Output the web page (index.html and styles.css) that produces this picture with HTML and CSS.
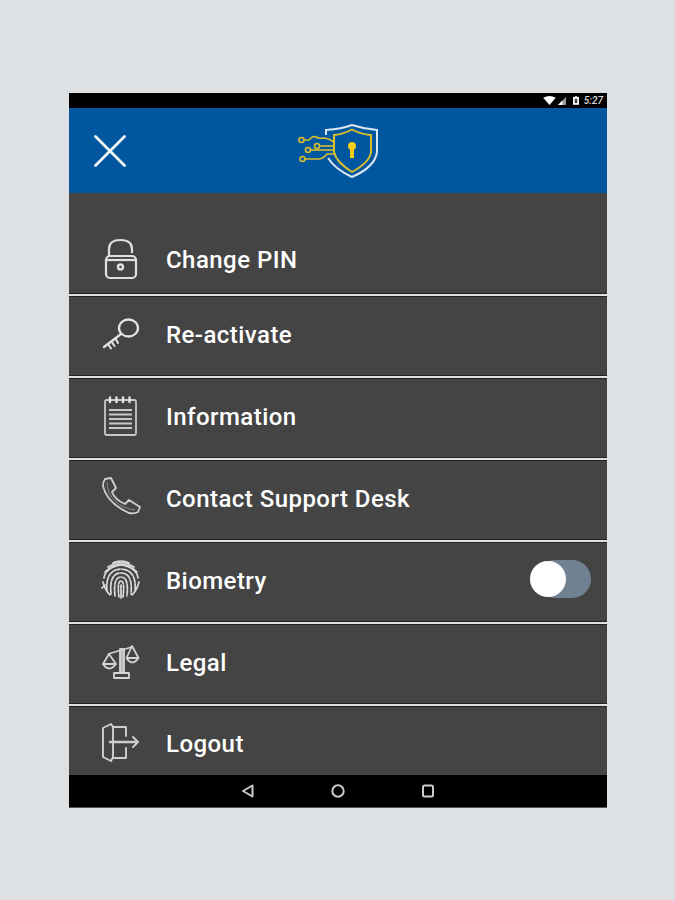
FILE: index.html
```html
<!DOCTYPE html>
<html lang="en">
<head>
<meta charset="utf-8">
<title>Menu</title>
<link rel="stylesheet" href="styles.css">
</head>
<body>
<main class="device">
  <div class="status">
    <svg class="st-wifi" viewBox="0 0 14 10"><path d="M0 2Q7-2 14 2L7 10Z" fill="#fff"/></svg>
    <svg class="st-signal" viewBox="0 0 9 9"><path d="M9 0V9H0Z" fill="#999"/><path d="M5 4V9H0Z" fill="#fff"/></svg>
    <svg class="st-batt" viewBox="0 0 7 10"><path d="M2 0H5V1H7V10H0V1H2Z" fill="#fff"/><rect x="2" y="3" width="3" height="5" fill="#444"/></svg>
    <span class="st-time">5:27</span>
  </div>
  <header class="topbar">
    <svg class="close" viewBox="0 0 32 32"><path d="M1.500 1.500L30.500 30.500M30.500 1.500L1.500 30.500" stroke="#f4f6f8" stroke-width="2.800" stroke-linecap="round" fill="none"/></svg>
    <svg class="logo" viewBox="0 0 80 54" fill="none">
      <path d="M28 11V6Q44 5 54 1Q66 5 79 6V28Q77 43 54 53Q37 45 30 34" stroke="#dbe6f5" stroke-width="2"/>
      <path d="M36 11Q46 10 54 5.500Q62 10 73 11V28Q72 38 54 48Q38 38 36 28Z" stroke="#d9bf2c" stroke-width="2"/>
      <circle cx="54" cy="22" r="4" fill="#f5cd1a"/>
      <rect x="52" y="23" width="4" height="11" fill="#f5cd1a"/>
      <g stroke="#d9bf2c" stroke-width="1.600">
        <circle cx="3.500" cy="16" r="2.500"/><circle cx="19" cy="22" r="2.500"/><circle cx="10" cy="26" r="2.500"/><circle cx="4.500" cy="35" r="2.500"/>
        <path d="M6 16H11Q14 12 17 12.500Q21 15 25 14Q30 14 36 18"/><path d="M21.500 22H36"/><path d="M12.500 26H36"/><path d="M7 35H20Q25 35 29 30H36"/>
      </g>
    </svg>
  </header>
  <nav class="menu">
    <a class="row first">
      <svg class="ico" viewBox="0 0 36 40"><g fill="none" stroke="#e0e0e0" stroke-width="2.200"><rect x="4" y="16" width="30" height="22" rx="4"/><path d="M7 16V9Q7 0 18.500 0Q30 0 30 9V13"/><path d="M4 20H34"/><circle cx="18.500" cy="27" r="2.500" stroke-width="2.400"/></g></svg>
      <span class="label">Change PIN</span>
    </a>
    <a class="row">
      <svg class="ico" viewBox="0 0 36 40"><g fill="none" stroke="#e4e4e4" stroke-width="2.300" stroke-linecap="round"><ellipse cx="26.500" cy="13" rx="9.500" ry="8.500"/><path d="M19 19L2 32"/><path d="M6 29L9 33.500M9.500 26.500L12.500 31M13.500 23.500L16 28" stroke-width="2"/></g></svg>
      <span class="label">Re-activate</span>
    </a>
    <a class="row">
      <svg class="ico" viewBox="0 0 36 40"><g fill="none" stroke="#c8c8c8"><rect x="3" y="3" width="31" height="35" rx="1.500" stroke-width="1.800"/><path d="M8 0.500V5M14.500 0.500V5M21 0.500V5M27.500 0.500V5" stroke="#e4e4e4" stroke-width="2.400" stroke-linecap="round"/><path d="M7 13H30M7 17.500H30M7 22H30M7 26.500H30M7 31H30" stroke-width="2"/></g></svg>
      <span class="label">Information</span>
    </a>
    <a class="row">
      <svg class="ico" viewBox="0 0 36 40"><path d="M3 0L9-1L14 9L10 13Q13 21 23 25L27 21L38 28L36 33Q32 35 27 34Q5 24 1 7Q1 3 3 0Z" fill="none" stroke="#cfcfcf" stroke-width="1.800" stroke-linejoin="round"/><path d="M5 3Q5 15 14 23Q20 29 33 31" fill="none" stroke="#8a8a8a"/></svg>
      <span class="label">Contact Support Desk</span>
    </a>
    <a class="row">
      <svg class="ico" viewBox="0 0 36 40"><g fill="none" stroke="#dcdcdc" stroke-width="1.700" stroke-linecap="round"><path d="M11 2Q19-2 27 2" stroke-dasharray="3 1.500"/><path d="M6 6Q19-3 32 6"/><path d="M3 11Q19-5 35 11"/><path d="M2 17Q3 7 19 4Q35 7 36 17"/><path d="M5 30Q3 9 19 8Q35 9 33 30" stroke-dasharray="6 1.500"/><path d="M9 33Q7 12 19 12Q31 12 29 33" stroke-dasharray="5 1.500"/><path d="M13 35Q11 16 19 16Q27 16 25 35" stroke-dasharray="4 1.500"/><path d="M17 36Q15 20 19 20Q23 20 21 36" stroke-dasharray="3 1.500"/><path d="M19 24V37"/><path d="M1 21Q3 29 8 34"/><path d="M37 21Q35 29 30 34"/><path d="M3 24L0 27"/></g></svg>
      <span class="label">Biometry</span>
      <span class="toggle"><span class="knob"></span></span>
    </a>
    <a class="row">
      <svg class="ico" viewBox="0 0 36 40"><g fill="none" stroke="#d4d4d4" stroke-width="1.800" stroke-linejoin="round"><path d="M18 6H22V30H18Z" fill="#bbb"/><path d="M12 30H27V35H12Z"/><path d="M6 11L30 4"/><path d="M7 11L1 21H14Z"/><path d="M1 21Q7 30 14 21"/><path d="M30 3L24.500 15H36.500Z"/><path d="M24.500 15Q30 24 36.500 15"/></g></svg>
      <span class="label">Legal</span>
    </a>
    <a class="row last">
      <svg class="ico" viewBox="0 0 36 40"><g fill="none" stroke="#cfcfcf" stroke-width="1.900" stroke-linejoin="round" stroke-linecap="round"><path d="M11 3H24V12M24 24V34H11"/><path d="M1 4L9 0L11 3V33L9 37L1 33Z"/><path d="M8 18H35" stroke-width="2.500"/><path d="M31 13L36 18L31 23"/></g></svg>
      <span class="label">Logout</span>
    </a>
  </nav>
  <footer class="navbar">
    <svg class="nav-ico" viewBox="0 0 14 14"><path d="M11.500 1.500V12.500L2 7Z" fill="none" stroke="#ccc" stroke-width="2" stroke-linejoin="round"/></svg>
    <svg class="nav-ico" viewBox="0 0 14 14"><circle cx="7" cy="7" r="5.700" fill="none" stroke="#ccc" stroke-width="2"/></svg>
    <svg class="nav-ico" viewBox="0 0 14 14"><rect x="2" y="1.500" width="10" height="11" rx="1.500" fill="none" stroke="#ccc" stroke-width="2"/></svg>
  </footer>
</main>
</body>
</html>
```
FILE: styles.css
```css
html, body { margin: 0; height: 100%; }
body {
  background: #dde1e4;
  padding: 93px 0 0 69px;
  box-sizing: border-box;
  font-family: Roboto, "Liberation Sans", sans-serif;
}
.device {
  width: 538px;
  height: 714px;
  display: flex;
  flex-direction: column;
  background: #000;
  overflow: hidden;
  border-bottom: 1px solid #555;
}
.status {
  height: 15px;
  flex: none;
  display: flex;
  align-items: center;
  justify-content: flex-end;
  padding-right: 4px;
  background: #000;
  color: #ddd;
}
.st-wifi { width: 13px; height: 9px; margin-right: 2px; }
.st-signal { width: 8px; height: 8px; margin-right: 7px; }
.st-batt { width: 6px; height: 9px; margin-right: 5px; }
.st-time { font-size: 10px; font-weight: 500; font-style: italic; line-height: 1; }
.topbar {
  height: 85px;
  flex: none;
  display: flex;
  align-items: center;
  background: #01579f;
  padding-left: 25px;
}
.close { width: 32px; height: 32px; }
.logo {
  width: 80px;
  height: 54px;
  margin: 0 0 0 172px;
}
.menu {
  flex: 1;
  min-height: 0;
  display: flex;
  flex-direction: column;
  gap: 1px;
  background: #222;
  overflow: hidden;
}
.row {
  height: 81px;
  flex: none;
  box-sizing: border-box;
  display: flex;
  align-items: center;
  padding: 0 16px 4px 33px;
  background: #444;
  border-bottom: 2px solid #e0e0e0;
  box-shadow: inset 0 -1px 0 #222;
}
.row.first { height: 103px; padding-top: 33px; padding-bottom: 0; }
.row.last { height: 68px; border-bottom: 0; padding-top: 6px; padding-bottom: 0; box-shadow: none; }
.ico { width: 36px; height: 40px; flex: none; overflow: visible; }
.label {
  margin-left: 28px;
  color: #fff;
  font-size: 24px;
  font-weight: 500;
  letter-spacing: 0.45px;
  flex: 1;
  white-space: nowrap;
}
.toggle {
  width: 55px;
  height: 38px;
  margin-bottom: 4px;
  border-radius: 19px;
  background: #708292;
  position: relative;
  flex: none;
}
.knob {
  position: absolute;
  left: -6px;
  top: 1px;
  width: 36px;
  height: 36px;
  border-radius: 50%;
  background: #fff;
}
.navbar {
  height: 32px;
  flex: none;
  display: flex;
  justify-content: center;
  align-items: center;
  gap: 76px;
  background: #000;
}
.nav-ico { width: 14px; height: 14px; }
```
